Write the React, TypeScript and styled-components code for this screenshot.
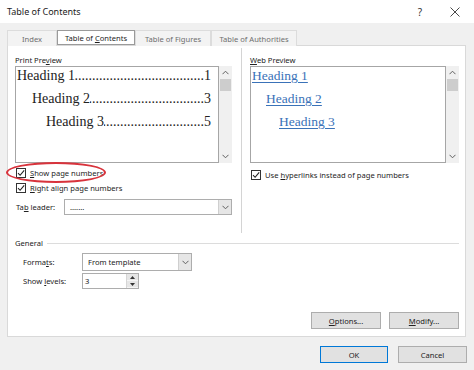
import React from "react";
import styled, { createGlobalStyle } from "styled-components";

const GlobalStyle = createGlobalStyle`
  html, body {
    margin: 0;
    padding: 0;
  }
  body {
    background: #f0f0f0;
    font-family: "Noto Sans", "Liberation Sans", sans-serif;
    font-size: 7.6px;
    color: #1e1e1e;
  }
  * {
    box-sizing: border-box;
  }
`;

const Dialog = styled.div`
  width: 474px;
  height: 370px;
  display: flex;
  flex-direction: column;
  background: #f0f0f0;
  overflow: hidden;
`;

const TitleBar = styled.div`
  height: 23px;
  flex-shrink: 0;
  background: #ffffff;
  display: flex;
  align-items: center;
  padding-left: 7px;
  font-size: 9px;
  color: #222;
`;

const TitleText = styled.span`
  flex: 1;
`;

const TitleButton = styled.div<{ $w: number }>`
  width: ${(p) => p.$w}px;
  height: 23px;
  display: flex;
  align-items: center;
  justify-content: center;
  font-size: 10px;
  color: #333;
`;

const Body = styled.div`
  flex: 1;
  padding: 7px 7px 0 7px;
  display: flex;
  flex-direction: column;
`;

const TabStrip = styled.div`
  height: 15px;
  display: flex;
  align-items: flex-end;
`;

const Tab = styled.div<{ $w: number; $active?: boolean }>`
  width: ${(p) => p.$w}px;
  height: ${(p) => (p.$active ? 15 : 16)}px;
  margin-bottom: ${(p) => (p.$active ? 0 : -1)}px;
  display: flex;
  align-items: center;
  justify-content: center;
  background: ${(p) => (p.$active ? "#ffffff" : "#f3f3f3")};
  border: 1px solid ${(p) => (p.$active ? "#9a9a9a" : "#dcdcdc")};
  border-bottom: ${(p) => (p.$active ? "1px solid #9a9a9a" : "none")};
  color: ${(p) => (p.$active ? "#1e1e1e" : "#6e6e6e")};
  position: relative;
  z-index: ${(p) => (p.$active ? 2 : 1)};
`;

const Panel = styled.div`
  width: 459px;
  height: 292px;
  background: #ffffff;
  border: 1px solid #d9d9d9;
  padding: 2px 6px 7px 7px;
  display: flex;
  flex-direction: column;
`;

const Columns = styled.div`
  height: 185px;
  display: grid;
  grid-template-columns: 217px 1fr 209px;
`;

const Column = styled.div`
  display: flex;
  flex-direction: column;
  padding-top: 7px;
`;

const Divider = styled.div`
  width: 1px;
  justify-self: center;
  background: #d4d4d4;
`;

const Label = styled.div`
  height: 10px;
  line-height: 10px;
  color: #222;
`;

const Key = styled.span`
  text-decoration: underline;
`;

const PreviewRow = styled.div`
  margin-top: 1px;
  height: 97px;
  display: flex;
`;

const PreviewBox = styled.div`
  flex: 1;
  border: 1px solid #a6a6a6;
  overflow: hidden;
`;

const ScrollBar = styled.div`
  width: 13px;
  background: #f0f0f0;
  display: flex;
  flex-direction: column;
  align-items: center;
`;

const ScrollArrow = styled.div`
  height: 13px;
  width: 13px;
  display: flex;
  align-items: center;
  justify-content: center;
`;

const ScrollThumb = styled.div`
  width: 11px;
  height: 12px;
  background: #cdcdcd;
`;

const ScrollSpace = styled.div`
  flex: 1;
`;

const HeadingLine = styled.div<{ $indent: number }>`
  height: 23px;
  line-height: 18px;
  display: flex;
  padding-left: ${(p) => 1 + p.$indent}px;
  padding-right: 7px;
  font-family: "Liberation Serif", "Times New Roman", serif;
  font-size: 14px;
  color: #222;
  white-space: nowrap;
`;

const Leader = styled.span`
  flex: 1;
  overflow: hidden;
  display: flex;
  justify-content: flex-end;
`;

const WebHeading = styled.div<{ $indent: number }>`
  height: 23px;
  line-height: 18px;
  padding-left: ${(p) => 1 + p.$indent}px;
  font-family: "Liberation Serif", "Times New Roman", serif;
  font-size: 13.5px;
  color: #3a72b8;
  white-space: nowrap;
`;

const LinkText = styled.span`
  text-decoration: underline;
  text-underline-offset: 2px;
`;

const CheckRow = styled.div<{ $top: number }>`
  margin-top: ${(p) => p.$top}px;
  height: 11px;
  display: flex;
  align-items: center;
  gap: 4px;
  position: relative;
  padding-left: 1px;
`;

const Box = styled.div`
  width: 10px;
  height: 10px;
  border: 1px solid #333;
  background: #fff;
  display: flex;
  align-items: center;
  justify-content: center;
`;

const Highlight = styled.div`
  position: absolute;
  left: -9px;
  top: -5px;
  width: 100px;
  height: 21px;
  border: 2px solid #d8333c;
  border-radius: 50%;
  pointer-events: none;
`;

const FieldRow = styled.div<{ $top: number; $indent: number }>`
  margin-top: ${(p) => p.$top}px;
  display: flex;
  align-items: center;
  padding-left: ${(p) => p.$indent}px;
`;

const FieldLabel = styled.div<{ $w: number }>`
  width: ${(p) => p.$w}px;
  color: #222;
`;

const Select = styled.div<{ $w: number; $h: number }>`
  width: ${(p) => p.$w}px;
  height: ${(p) => p.$h}px;
  border: 1px solid #adadad;
  background: #fff;
  display: flex;
  align-items: stretch;
`;

const SelectValue = styled.div<{ $pad?: number }>`
  flex: 1;
  display: flex;
  align-items: center;
  padding-left: ${(p) => p.$pad ?? 5}px;
  color: #222;
`;

const SelectArrow = styled.div`
  width: 13px;
  background: #e6e6e6;
  border-left: 1px solid #cfcfcf;
  display: flex;
  align-items: center;
  justify-content: center;
`;

const SpinButtons = styled.div`
  width: 12px;
  display: flex;
  flex-direction: column;
  border-left: 1px solid #d6d6d6;
`;

const SpinButton = styled.div`
  flex: 1;
  background: #e6e6e6;
  display: flex;
  align-items: center;
  justify-content: center;
  border-bottom: 1px solid #f5f5f5;
`;

const GroupHeader = styled.div`
  margin-top: 5px;
  height: 10px;
  display: flex;
  align-items: center;
  gap: 4px;
  color: #222;
`;

const GroupLine = styled.div`
  flex: 1;
  height: 1px;
  background: #dcdcdc;
`;

const ButtonRow = styled.div`
  margin-top: auto;
  display: flex;
  justify-content: flex-end;
  gap: 8px;
`;

const Button = styled.div<{ $w: number; $primary?: boolean }>`
  width: ${(p) => p.$w}px;
  height: 17px;
  background: #e1e1e1;
  border: 1px solid ${(p) => (p.$primary ? "#0078d7" : "#adadad")};
  display: flex;
  align-items: center;
  justify-content: center;
  color: #222;
`;

const Footer = styled.div`
  padding-top: 9px;
  display: flex;
  justify-content: flex-end;
  gap: 10px;
`;

const Chevron = ({ up }: { up?: boolean }) => (
  <svg width="7" height="5" viewBox="0 0 7 5">
    <path
      d={up ? "M0.5 4.2 L3.5 1.2 L6.5 4.2" : "M0.5 0.8 L3.5 3.8 L6.5 0.8"}
      fill="none"
      stroke="#606060"
      strokeWidth="1"
    />
  </svg>
);

const Tick = () => (
  <svg width="8" height="8" viewBox="0 0 8 8">
    <path d="M1 4.2 L3.1 6.3 L7.2 1.4" fill="none" stroke="#222" strokeWidth="1.1" />
  </svg>
);

const Triangle = ({ up }: { up?: boolean }) => (
  <svg width="5" height="3" viewBox="0 0 5 3">
    <path d={up ? "M0 3 L2.5 0 L5 3 Z" : "M0 0 L2.5 3 L5 0 Z"} fill="#333" />
  </svg>
);

const Scroll = () => (
  <ScrollBar>
    <ScrollArrow>
      <Chevron up />
    </ScrollArrow>
    <ScrollThumb />
    <ScrollSpace />
    <ScrollArrow>
      <Chevron />
    </ScrollArrow>
  </ScrollBar>
);

const printHeadings = [
  { text: "Heading 1", page: "1", indent: 0, dots: 37 },
  { text: "Heading 2", page: "3", indent: 15, dots: 33 },
  { text: "Heading 3", page: "5", indent: 29, dots: 29 },
];

const webHeadings = [
  { text: "Heading 1", indent: 0 },
  { text: "Heading 2", indent: 14 },
  { text: "Heading 3", indent: 27 },
];

export default function App() {
  return (
    <Dialog>
      <GlobalStyle />
      <TitleBar>
        <TitleText>Table of Contents</TitleText>
        <TitleButton $w={30}>?</TitleButton>
        <TitleButton $w={39}>
          <svg width="10" height="10" viewBox="0 0 10 10">
            <path d="M0.5 0.5 L9.5 9.5 M9.5 0.5 L0.5 9.5" stroke="#333" strokeWidth="0.9" />
          </svg>
        </TitleButton>
      </TitleBar>
      <Body>
        <TabStrip>
          <Tab $w={50}>Index</Tab>
          <Tab $w={78} $active>
            Table of&nbsp;<Key>C</Key>ontents
          </Tab>
          <Tab $w={76}>Table of Figures</Tab>
          <Tab $w={86}>Table of Authorities</Tab>
        </TabStrip>
        <Panel>
          <Columns>
            <Column>
              <Label>
                Print Pre<Key>v</Key>iew
              </Label>
              <PreviewRow>
                <PreviewBox>
                  {printHeadings.map((h) => (
                    <HeadingLine key={h.text} $indent={h.indent}>
                      <span>{h.text}</span>
                      <Leader>{".".repeat(h.dots)}</Leader>
                      <span>{h.page}</span>
                    </HeadingLine>
                  ))}
                </PreviewBox>
                <Scroll />
              </PreviewRow>
              <CheckRow $top={4}>
                <Highlight />
                <Box>
                  <Tick />
                </Box>
                <span>
                  <Key>S</Key>how page numbers
                </span>
              </CheckRow>
              <CheckRow $top={4}>
                <Box>
                  <Tick />
                </Box>
                <span>
                  <Key>R</Key>ight align page numbers
                </span>
              </CheckRow>
              <FieldRow $top={6} $indent={1}>
                <FieldLabel $w={48}>
                  Ta<Key>b</Key> leader:
                </FieldLabel>
                <Select $w={168} $h={16}>
                  <SelectValue>.......</SelectValue>
                  <SelectArrow>
                    <Chevron />
                  </SelectArrow>
                </Select>
              </FieldRow>
            </Column>
            <Divider />
            <Column>
              <Label>
                <Key>W</Key>eb Preview
              </Label>
              <PreviewRow>
                <PreviewBox>
                  {webHeadings.map((h) => (
                    <WebHeading key={h.text} $indent={h.indent}>
                      <LinkText>{h.text}</LinkText>
                    </WebHeading>
                  ))}
                </PreviewBox>
                <Scroll />
              </PreviewRow>
              <CheckRow $top={6}>
                <Box>
                  <Tick />
                </Box>
                <span>
                  Use <Key>h</Key>yperlinks instead of page numbers
                </span>
              </CheckRow>
            </Column>
          </Columns>
          <GroupHeader>
            <span>General</span>
            <GroupLine />
          </GroupHeader>
          <FieldRow $top={5} $indent={8}>
            <FieldLabel $w={59}>
              Forma<Key>t</Key>s:
            </FieldLabel>
            <Select $w={110} $h={18}>
              <SelectValue>From template</SelectValue>
              <SelectArrow>
                <Chevron />
              </SelectArrow>
            </Select>
          </FieldRow>
          <FieldRow $top={2} $indent={8}>
            <FieldLabel $w={59}>
              Show <Key>l</Key>evels:
            </FieldLabel>
            <Select $w={57} $h={16}>
              <SelectValue $pad={2}>3</SelectValue>
              <SpinButtons>
                <SpinButton>
                  <Triangle up />
                </SpinButton>
                <SpinButton>
                  <Triangle />
                </SpinButton>
              </SpinButtons>
            </Select>
          </FieldRow>
          <ButtonRow>
            <Button $w={70}>
              <span>
                <Key>O</Key>ptions...
              </span>
            </Button>
            <Button $w={70}>
              <span>
                <Key>M</Key>odify...
              </span>
            </Button>
          </ButtonRow>
        </Panel>
        <Footer>
          <Button $w={68} $primary>
            OK
          </Button>
          <Button $w={69}>Cancel</Button>
        </Footer>
      </Body>
    </Dialog>
  );
}
